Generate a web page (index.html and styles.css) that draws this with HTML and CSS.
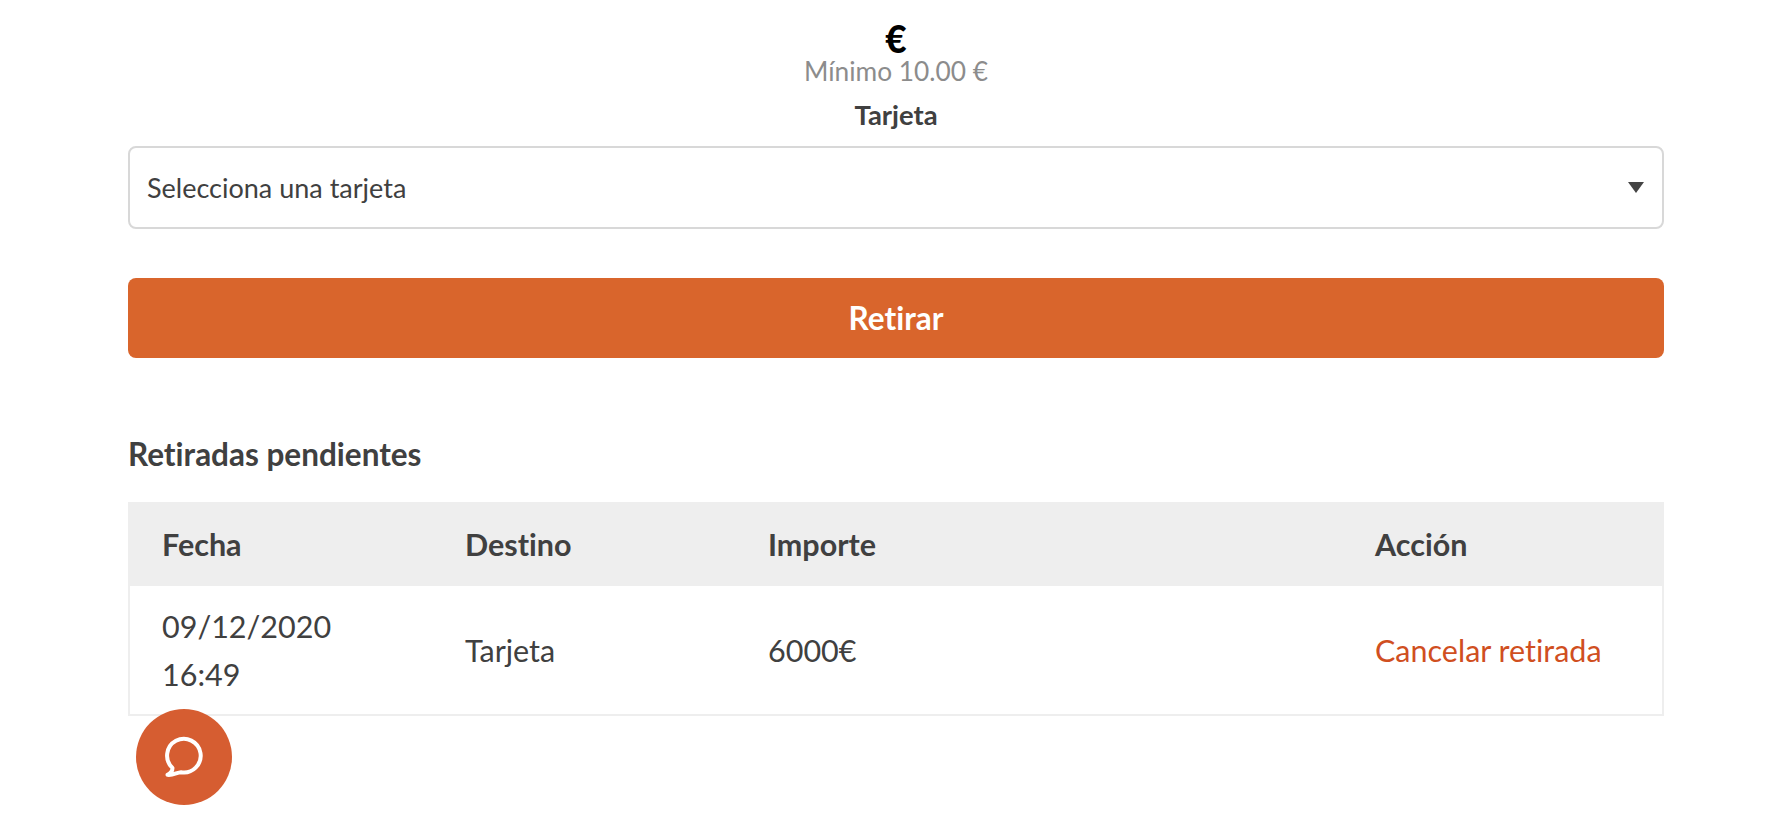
FILE: index.html
```html
<!DOCTYPE html>
<html lang="es">
<head>
<meta charset="utf-8">
<title>Retirar</title>
<link rel="stylesheet" href="styles.css">
</head>
<body>
<main class="page">
  <div class="currency">€</div>
  <div class="minimum">Mínimo 10.00 €</div>
  <div class="field-label">Tarjeta</div>
  <div class="select" role="combobox">
    <span>Selecciona una tarjeta</span>
    <svg class="arrow" width="16" height="11" viewBox="0 0 16 11"><path d="M0 0H16L8 11Z" fill="#444"/></svg>
  </div>
  <button class="submit">Retirar</button>
  <h2 class="section-title">Retiradas pendientes</h2>
  <table class="table">
    <colgroup><col class="c1"><col class="c2"><col class="c3"><col class="c4"></colgroup>
    <thead>
      <tr><th>Fecha</th><th>Destino</th><th>Importe</th><th>Acción</th></tr>
    </thead>
    <tbody>
      <tr>
        <td>09/12/2020<br>16:49</td>
        <td>Tarjeta</td>
        <td>6000€</td>
        <td><a class="cancel" href="#">Cancelar retirada</a></td>
      </tr>
    </tbody>
  </table>
</main>
<button class="chat" aria-label="Chat">
  <svg width="44" height="44" viewBox="0 0 44 44" fill="none">
    <path d="M10.500 33A16.800 16.800 0 1 1 19 37.200C15 37.400 11 40.500 5.500 39.800C9 38 10.500 35.500 10.500 33Z" stroke="#fff" stroke-width="4" stroke-linejoin="round"/>
  </svg>
</button>
</body>
</html>
```
FILE: styles.css
```css
* { box-sizing: border-box; }
html, body { margin: 0; padding: 0; background: #fff; }
body {
  font-family: Lato, "Noto Sans", sans-serif;
  font-variant-ligatures: none;
  color: #404040;
  font-size: 27px;
  height: 828px;
  overflow: hidden;
  position: relative;
}
.page {
  padding: 21px 128px 0;
  display: flex;
  flex-direction: column;
}
.currency {
  text-align: center;
  font-size: 37px;
  font-weight: 900;
  line-height: 36px;
  color: #000;
}
.minimum {
  text-align: center;
  font-size: 26.300px;
  line-height: 28px;
  color: #8c8c8c;
}
.field-label {
  text-align: center;
  font-weight: 700;
  font-size: 27.400px;
  line-height: 30px;
  margin-top: 15px;
}
.select {
  margin-top: 16px;
  height: 83px;
  border: 2px solid #d8d8d8;
  border-radius: 8px;
  display: flex;
  align-items: center;
  justify-content: space-between;
  padding: 0 18px 0 17px;
}
.submit {
  margin-top: 49px;
  height: 80px;
  border: 0;
  border-radius: 8px;
  background: #d9652c;
  color: #fff;
  font: 700 31.500px Lato, sans-serif;
  font-variant-ligatures: none;
}
.section-title {
  margin: 80px 0 0;
  font-size: 31.500px;
  line-height: 32px;
  font-weight: 700;
}
.table {
  margin-top: 32px;
  width: 1536px;
  table-layout: fixed;
  border-collapse: separate;
  border-spacing: 0;
  font-size: 30.500px;
}
.c1, .c2 { width: 303px; }
.c3 { width: 607px; }
.c4 { width: 323px; }
.table th {
  height: 84px;
  background: #eee;
  text-align: left;
  font-weight: 700;
  padding: 0 0 0 34px;
}
.table td {
  height: 130px;
  padding: 0 0 0 34px;
  line-height: 48px;
  border-bottom: 2px solid #eee;
  vertical-align: middle;
}
.table td:first-child { border-left: 2px solid #eee; padding-left: 32px; }
.table td:last-child { border-right: 2px solid #eee; }
.cancel { color: #d04f1f; text-decoration: none; }
.chat {
  position: absolute;
  left: 136px;
  top: 709px;
  width: 96px;
  height: 96px;
  border: 0;
  padding: 0;
  border-radius: 50%;
  background: #d65d31;
  display: flex;
  align-items: center;
  justify-content: center;
}
```
